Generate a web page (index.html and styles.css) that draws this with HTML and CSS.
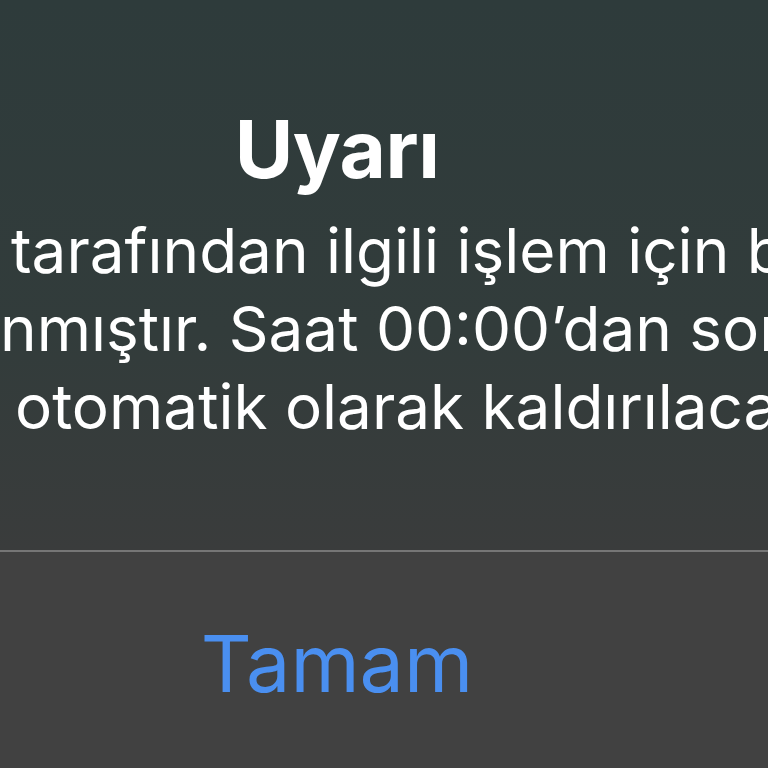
FILE: index.html
```html
<!DOCTYPE html>
<html lang="tr">
<head>
<meta charset="utf-8">
<link rel="stylesheet" href="styles.css">
</head>
<body>
<div class="alert">
  <div class="content">
    <h1 class="title">Uyarı</h1>
    <div class="message">
      <div class="line l1">tarafından ilgili işlem için bir</div>
      <div class="line l2">nmıştır. Saat 00:00’dan sonra</div>
      <div class="line l3">otomatik olarak kaldırılacaktır.</div>
    </div>
  </div>
  <div class="divider"></div>
  <div class="actions">
    <div class="button">Tamam</div>
  </div>
</div>
</body>
</html>
```

FILE: styles.css
```css
html, body {
  margin: 0;
  padding: 0;
  width: 768px;
  height: 768px;
  overflow: hidden;
  background: #404040;
}
.alert {
  width: 768px;
  height: 768px;
  display: flex;
  flex-direction: column;
  font-family: Inter, "Noto Sans", sans-serif;
  color: #ffffff;
}
.content {
  height: 550px;
  background: linear-gradient(180deg, #2e3b3b 0%, #323c3b 60%, #3a3c3c 100%);
  overflow: hidden;
}
.title {
  margin: 0;
  padding-top: 101px;
  width: 674px;
  text-align: center;
  font-size: 80px;
  font-weight: 700;
  line-height: 96px;
  letter-spacing: -0.5px;
}
.message {
  padding-top: 15px;
  font-size: 62px;
  font-weight: 400;
  line-height: 78px;
}
.line {
  white-space: nowrap;
}
.l1 { padding-left: 11px; }
.l2 { padding-left: 0; }
.l3 { padding-left: 15px; }
.divider {
  height: 2px;
  background: #767676;
}
.actions {
  flex: 1;
  background: #414141;
}
.button {
  width: 674px;
  text-align: center;
  padding-top: 63px;
  font-size: 79px;
  line-height: 96px;
  color: #4a8ff0;
}
```
